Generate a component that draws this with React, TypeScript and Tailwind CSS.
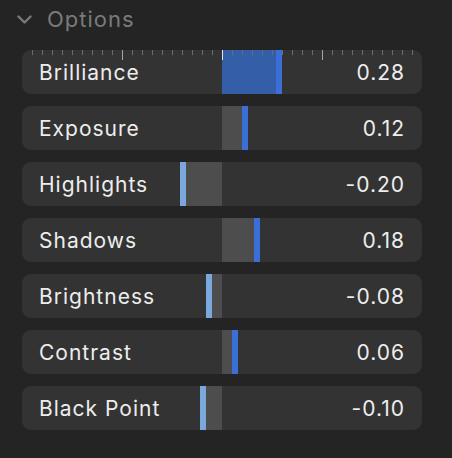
import type { ReactNode } from "react";

type Adjust = {
  name: string;
  value: string;
  // offset in px from the centre line; negative pulls left
  offset: number;
  active?: boolean;
};

const rows: Adjust[] = [
  { name: "Brilliance", value: "0.28", offset: 54, active: true },
  { name: "Exposure", value: "0.12", offset: 20 },
  { name: "Highlights", value: "-0.20", offset: -42 },
  { name: "Shadows", value: "0.18", offset: 32 },
  { name: "Brightness", value: "-0.08", offset: -16 },
  { name: "Contrast", value: "0.06", offset: 10 },
  { name: "Black Point", value: "-0.10", offset: -22 },
];

const CENTER = 200;

// tick marks along the top of the active slider
function Ticks() {
  const ticks: ReactNode[] = [];
  for (let k = 0; k <= 38; k++) {
    const x = 10 + k * 10;
    const major = k === 9 || k === 29;
    const mid = k === 19;
    ticks.push(
      <span
        key={k}
        className={
          mid
            ? "absolute top-0 h-[10px] w-px bg-[#e6e6e6]"
            : major
              ? "absolute top-0 h-[10px] w-px bg-[#a8a8a8]"
              : "absolute top-0 h-[5px] w-px bg-[#6c6c6c]"
        }
        style={{ left: x }}
      />,
    );
  }
  return <div className="pointer-events-none absolute inset-x-0 top-0 h-[10px]">{ticks}</div>;
}

function SliderRow({ row }: { row: Adjust }) {
  const pos = row.offset >= 0;
  const indX = CENTER + row.offset;
  const fillLeft = pos ? CENTER : indX + 6;
  const fillWidth = pos ? row.offset : CENTER - fillLeft;

  return (
    <div className="relative flex h-[44px] items-center justify-between overflow-hidden rounded-[9px] bg-[#333333] pl-[17px] pr-[18px] pt-[2px]">
      <div
        className={`absolute top-0 h-full ${row.active ? "bg-[#345ea8]" : "bg-[#4d4d4d]"}`}
        style={{ left: fillLeft, width: fillWidth }}
      />
      <div
        className={`absolute top-0 h-full w-[6px] ${pos ? "bg-[#3a6fd8]" : "bg-[#7ba8dd]"}`}
        style={{ left: indX }}
      />
      {row.active && <Ticks />}
      <span className="relative text-[21px] tracking-[1px] text-[#ededed]">{row.name}</span>
      <span className="relative mr-[-1px] text-[21px] tracking-[1px] text-[#ededed]">{row.value}</span>
    </div>
  );
}

export default function App() {
  return (
    <div
      className="h-[458px] w-[452px] bg-[#242424]"
      style={{ fontFamily: "Inter, 'Noto Sans', sans-serif" }}
    >
      <div className="flex h-[50px] items-center gap-[15px] pb-[12px] pl-[17px]">
        <svg width="15" height="9" viewBox="0 0 15 9" fill="none" className="mt-[1px]">
          <path d="M1.5 1.5L7.5 7.5L13.5 1.5" stroke="#7a7a7a" strokeWidth="2.4" strokeLinecap="round" strokeLinejoin="round" />
        </svg>
        <span className="text-[22px] tracking-[1px] text-[#7a7a7a]">Options</span>
      </div>
      <div className="flex w-[422px] flex-col gap-[12px] pl-[22px]">
        {rows.map((r) => (
          <SliderRow key={r.name} row={r} />
        ))}
      </div>
    </div>
  );
}
